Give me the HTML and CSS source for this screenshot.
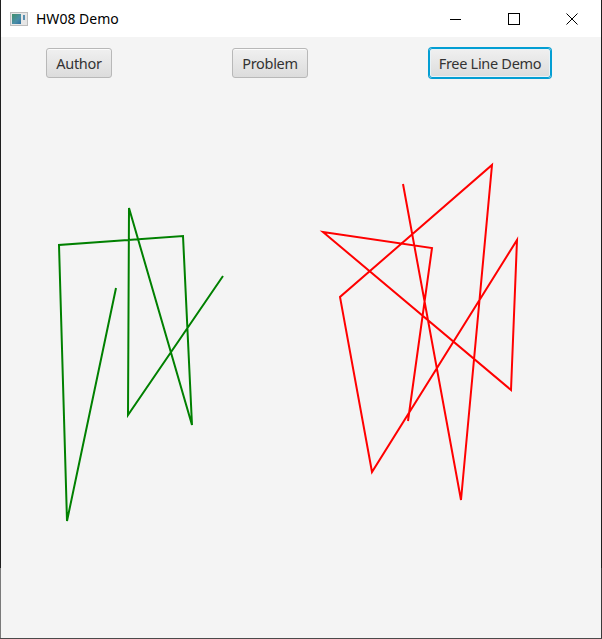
FILE: index.html
```html
<!DOCTYPE html>
<html>
<head>
<meta charset="utf-8">
<link rel="stylesheet" href="styles.css">
</head>
<body>
<div class="window">
  <div class="titlebar">
    <div class="title">
      <span class="app-icon"><span class="app-icon-inner"></span><span class="app-icon-strip"></span></span>
      <span class="title-text">HW08 Demo</span>
    </div>
    <div class="controls">
      <span class="ctl">
        <svg width="12" height="12" viewBox="0 0 12 12"><line x1="0" y1="6.5" x2="11" y2="6.5" stroke="#000" stroke-width="1"/></svg>
      </span>
      <span class="ctl">
        <svg width="12" height="12" viewBox="0 0 12 12"><rect x="0.5" y="0.5" width="11" height="11" fill="none" stroke="#000" stroke-width="1"/></svg>
      </span>
      <span class="ctl">
        <svg width="12" height="12" viewBox="0 0 12 12"><path d="M0.5 0.5 L11.5 11.5 M11.5 0.5 L0.5 11.5" stroke="#000" stroke-width="1"/></svg>
      </span>
    </div>
  </div>
  <div class="content">
    <div class="toolbar">
      <button class="btn btn-author">Author</button>
      <button class="btn btn-problem">Problem</button>
      <button class="btn btn-focus">Free Line Demo</button>
    </div>
    <svg class="canvas" width="600" height="602" viewBox="1 36 600 602">
      <polyline fill="none" stroke="#008000" stroke-width="2" stroke-linejoin="miter"
        points="116,287 67,520 59,244 183,235 192,424 129,207 128,414 223,275"/>
      <polyline fill="none" stroke="#ff0000" stroke-width="2" stroke-linejoin="miter"
        points="403,183 461,499 492,164 340,296 372,471 517,239 511,389 323,231 432,247 408,420"/>
    </svg>
  </div>
  <div class="edge-left"></div>
  <div class="edge-right"></div>
  <div class="edge-bottom"></div>
</div>
</body>
</html>
```
FILE: styles.css
```css
html, body {
  margin: 0;
  padding: 0;
  background: #f4f4f4;
}
.window {
  position: relative;
  width: 600px;
  height: 639px;
  border-left: 1px solid #1f1f1f;
  border-right: 1px solid #1f1f1f;
  background: #f4f4f4;
  display: flex;
  flex-direction: column;
  font-family: "Noto Sans", "Open Sans", sans-serif;
}
.titlebar {
  height: 37px;
  background: #ffffff;
  display: flex;
  align-items: center;
  justify-content: space-between;
  flex: 0 0 auto;
}
.title {
  display: flex;
  align-items: center;
  padding-left: 9px;
}
.app-icon {
  position: relative;
  width: 16px;
  height: 12px;
  border: 1px solid #bdbdbd;
  background: #e6e6e6;
  display: inline-block;
  margin-right: 8px;
}
.app-icon-inner {
  position: absolute;
  left: 1px;
  top: 1px;
  width: 9px;
  height: 10px;
  background: linear-gradient(135deg, #3f8f6a 0%, #4a8fa8 60%, #2e6fa0 100%);
}
.app-icon-strip {
  position: absolute;
  left: 12px;
  top: 2px;
  width: 2px;
  height: 5px;
  background: #5a8fb0;
}
.title-text {
  font-family: "Noto Sans", sans-serif;
  font-size: 14px;
  color: #000;
  letter-spacing: 0;
}
.controls {
  display: flex;
  height: 100%;
}
.ctl {
  width: 58px;
  display: flex;
  align-items: center;
  justify-content: center;
}
.ctl svg {
  display: block;
}
.content {
  position: relative;
  flex: 1 1 auto;
  background: #f4f4f4;
}
.toolbar {
  position: relative;
  z-index: 1;
  display: flex;
  padding-top: 11px;
  padding-left: 45px;
}
.btn {
  box-sizing: border-box;
  height: 30px;
  padding: 0;
  border: 1px solid #b8b8b8;
  border-radius: 3px;
  background: linear-gradient(#f0f0f0, #dcdcdc);
  color: #333333;
  font-family: "Noto Sans", "Open Sans", sans-serif;
  font-size: 14.5px;
  letter-spacing: -0.3px;
  line-height: 26px;
  text-align: center;
  box-shadow: inset 0 1px 0 #fbfbfb;
}
.btn-author { width: 66px; }
.btn-problem { width: 76px; margin-left: 120px; }
.btn-focus {
  width: 122px;
  margin-left: 121px;
  border: 1px solid #039ed3;
  box-shadow: 0 0 0 1px #039ed3, inset 0 0 0 1px #e8f2f7;
}
.canvas {
  position: absolute;
  left: 0;
  top: 0;
}
.edge-left {
  position: absolute;
  left: -1px;
  top: 568px;
  width: 1px;
  height: 71px;
  background: #7a7a7a;
}
.edge-right {
  position: absolute;
  right: -1px;
  top: 568px;
  width: 1px;
  height: 71px;
  background: #3a3a3a;
}
.edge-bottom {
  position: absolute;
  left: -1px;
  right: -1px;
  bottom: 0;
  height: 1px;
  background: #4a4a4a;
}
```
